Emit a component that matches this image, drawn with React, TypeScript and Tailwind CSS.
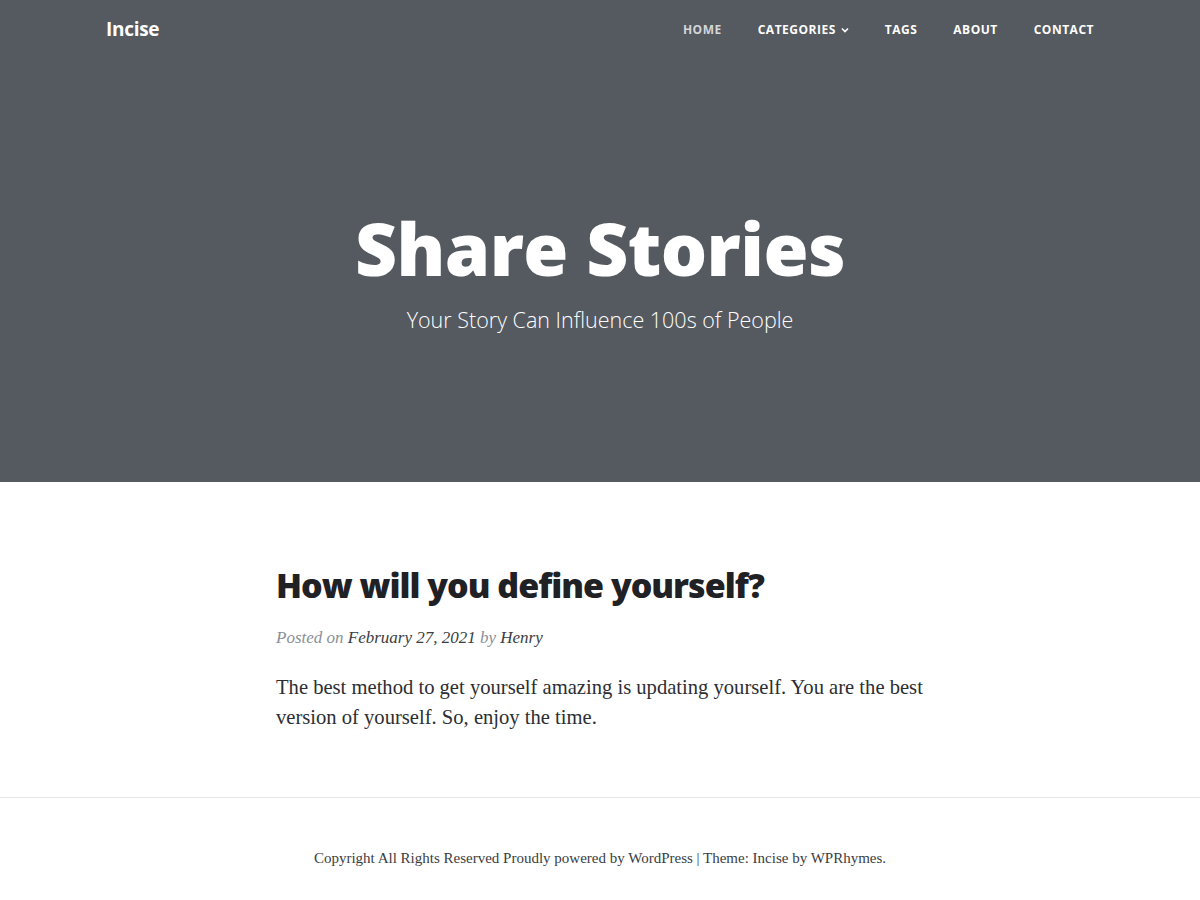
import React from "react";

export default function App() {
  const sans = { fontFamily: '"Open Sans", sans-serif' };
  return (
    <div className="min-h-[900px] bg-white" style={sans}>
      <header className="bg-[#555960] h-[482px] flex flex-col">
        <div className="w-[988px] mx-auto flex items-center justify-between h-[58px] pt-[1px]">
          <div className="text-white font-bold text-[19px] tracking-[-0.3px]">Incise</div>
          <nav className="flex items-center text-[12px] font-bold tracking-[0.5px] uppercase pt-[1px]">
            <a className="text-[#d4d6d9] mr-[36px]">Home</a>
            <a className="text-white mr-[36px] flex items-center">
              Categories
              <svg width="8" height="6" viewBox="0 0 8 6" className="ml-[5px]">
                <path d="M1 1.5 L4 4.5 L7 1.5" stroke="white" strokeWidth="1.6" fill="none" />
              </svg>
            </a>
            <a className="text-white mr-[36px]">Tags</a>
            <a className="text-white mr-[36px]">About</a>
            <a className="text-white">Contact</a>
          </nav>
        </div>
        <div className="flex flex-col items-center mt-[146px]">
          <h1 className="text-white font-extrabold text-[73px] leading-[88px] tracking-[-0.6px]">Share Stories</h1>
          <p className="text-white font-light text-[21.5px] leading-[30px] mt-[13px]">Your Story Can Influence 100s of People</p>
        </div>
      </header>
      <main className="w-[648px] mx-auto pt-[79px] pb-[60px]">
        <h2 className="text-[#1f2124] font-extrabold text-[34px] leading-[48px] tracking-[-1px]">How will you define yourself?</h2>
        <div className="mt-[17px] text-[17px] italic leading-[24px]" style={{ fontFamily: '"Liberation Serif", serif' }}>
          <span className="text-[#8a8f97]">Posted on </span>
          <span className="text-[#3a3d42]">February 27, 2021</span>
          <span className="text-[#8a8f97]"> by </span>
          <span className="text-[#3a3d42]">Henry</span>
        </div>
        <p className="mt-[22px] text-[20.6px] leading-[30px] text-[#2b2e33]" style={{ fontFamily: '"Liberation Serif", serif' }}>
          The best method to get yourself amazing is updating yourself. You are the best version of yourself. So, enjoy the time.
        </p>
      </main>
      <footer className="border-t border-[#e6e6e6] mt-[5px]">
        <p className="text-center text-[15px] text-[#3a3d42] pt-[49px]" style={{ fontFamily: '"Liberation Serif", serif' }}>
          Copyright All Rights Reserved Proudly powered by WordPress | Theme: Incise by WPRhymes.
        </p>
      </footer>
    </div>
  );
}
